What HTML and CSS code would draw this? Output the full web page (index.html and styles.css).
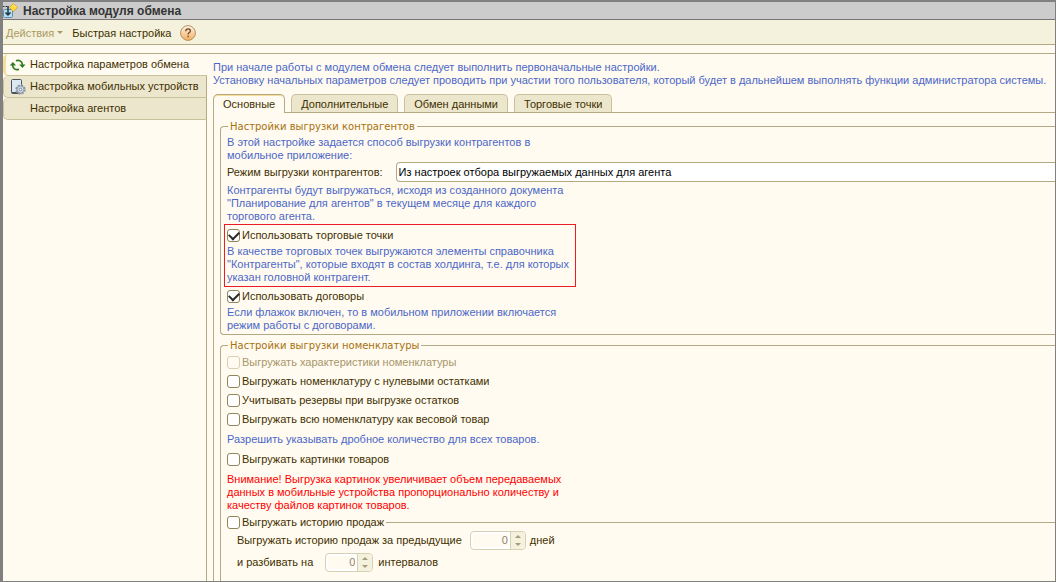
FILE: index.html
```html
<!DOCTYPE html>
<html lang="ru">
<head>
    <meta charset="UTF-8">
    <meta name="viewport" content="width=device-width, initial-scale=1.0">
    <title>Настройка модуля обмена</title>

    <link rel="stylesheet" href="styles.css">
</head>
<body>

    <div class="window">
        <header class="titlebar">
            <svg class="title-icon" width="17" height="16" viewBox="0 0 17 16">
                <rect x=".5" y="6.500" width="9" height="8" rx="1" fill="#b5dcf2" stroke="#5f8fae"/>
                <path d="M5 3v9M2.500 9.500L5 12l2.500-2.500" fill="none" stroke="#1f3442" stroke-width="1.500"/>
                <path d="M0 3.500h1.500M2.500 3.500h1.500" stroke="#1f3442"/>
                <path d="M10.500.5l4 4-4 4-4-4z" fill="#ffd943" stroke="#e0aa28"/>
                <path d="M10.500 2l2 2" stroke="#fff3b0"/>
            </svg>
            <h1>Настройка модуля обмена</h1>
        </header>

        <div class="toolbar">
            <button class="tool actions" type="button" disabled>Действия <span class="arrow"></span></button>
            <button class="tool" type="button">Быстрая настройка</button>
            <button class="tool help" type="button" aria-label="Справка">
                <svg width="16" height="16" viewBox="0 0 16 16">
                    <defs>
                        <linearGradient id="helpFill" x1="0" y1="0" x2="0" y2="1">
                            <stop offset="0" stop-color="#fff3e0"/>
                            <stop offset="1" stop-color="#f3ad60"/>
                        </linearGradient>
                    </defs>
                    <circle cx="8" cy="8" r="7.400" fill="url(#helpFill)" stroke="#b39468"/>
                    <path d="M5.800 6.200c0-3 4.600-3 4.600-.3 0 1.700-2.300 1.600-2.300 3.500M8.100 10.700v1.500" fill="none" stroke="#6b4326" stroke-width="1.300"/>
                </svg>
            </button>
        </div>

        <div class="workspace">
            <nav class="sections">
                <a class="section active" href="#params">
                    <svg width="16" height="16" viewBox="0 0 16 16">
                        <path d="M6 3.800c3-1.300 6 .2 6.500 4M9 12.200c-3 1.300-6-.2-6.500-4" fill="none" stroke="#2c7a1c" stroke-width="1.700"/>
                        <path d="M9.200 7.500h6.300l-3.100 3.500zM-.2 8.500h6.300L2.900 5z" fill="#2c7a1c"/>
                    </svg>
                    Настройка параметров обмена
                </a>
                <a class="section" href="#devices">
                    <svg width="16" height="16" viewBox="0 0 16 16">
                        <rect x="1.500" y=".5" width="10" height="14" rx="1" fill="#dce9f3" stroke="#4a525a"/>
                        <path d="M2 13.500h9" stroke="#4a525a"/>
                        <circle cx="10.500" cy="10.500" r="4.200" fill="#c3ccd6" stroke="#8b99a8" stroke-width="2" stroke-dasharray="2 1.300"/>
                        <circle cx="10.500" cy="10.500" r="3.500" fill="#d5dce3" stroke="#8b99a8"/>
                        <circle cx="10.500" cy="10.500" r="1.300" fill="#fff" stroke="#74869a"/>
                    </svg>
                    Настройка мобильных устройств
                </a>
                <a class="section" href="#agents">Настройка агентов</a>
            </nav>

            <main class="content">
                <p class="hint intro">При начале работы с модулем обмена следует выполнить первоначальные настройки.<br>Установку начальных параметров следует проводить при участии того пользователя, который будет в дальнейшем выполнять функции администратора системы.</p>

                <div class="tabs">
                    <button class="tab active" type="button">Основные</button>
                    <button class="tab" type="button">Дополнительные</button>
                    <button class="tab" type="button">Обмен данными</button>
                    <button class="tab" type="button">Торговые точки</button>
                </div>

                <div class="panel">
                    <fieldset class="group">
                        <legend>Настройки выгрузки контрагентов</legend>
                        <p class="hint">В этой настройке задается способ выгрузки контрагентов в<br>мобильное приложение:</p>
                        <div class="field">
                            <label for="mode">Режим выгрузки контрагентов:</label>
                            <input id="mode" type="text" value="Из настроек отбора выгружаемых данных для агента">
                        </div>
                        <p class="hint">Контрагенты будут выгружаться, исходя из созданного документа<br>"Планирование для агентов" в текущем месяце для каждого<br>торгового агента.</p>
                        <div class="highlight">
                            <label class="check"><input type="checkbox" checked>Использовать торговые точки</label>
                            <p class="hint">В качестве торговых точек выгружаются элементы справочника<br>"Контрагенты", которые входят в состав холдинга, т.е. для которых<br>указан головной контрагент.</p>
                        </div>
                        <label class="check"><input type="checkbox" checked>Использовать договоры</label>
                        <p class="hint">Если флажок включен, то в мобильном приложении включается<br>режим работы с договорами.</p>
                    </fieldset>

                    <fieldset class="group goods">
                        <legend>Настройки выгрузки номенклатуры</legend>
                        <label class="check disabled"><input type="checkbox" disabled>Выгружать характеристики номенклатуры</label>
                        <label class="check"><input type="checkbox">Выгружать номенклатуру с нулевыми остатками</label>
                        <label class="check"><input type="checkbox">Учитывать резервы при выгрузке остатков</label>
                        <label class="check"><input type="checkbox">Выгружать всю номенклатуру как весовой товар</label>
                        <p class="hint">Разрешить указывать дробное количество для всех товаров.</p>
                        <label class="check"><input type="checkbox">Выгружать картинки товаров</label>
                        <p class="hint warning">Внимание! Выгрузка картинок увеличивает объем передаваемых<br>данных в мобильные устройства пропорционально количеству и<br>качеству файлов картинок товаров.</p>
                        <div class="history-head">
                            <label class="check"><input type="checkbox">Выгружать историю продаж</label>
                        </div>
                        <div class="history">
                            <div class="period">
                                <label for="days">Выгружать историю продаж за предыдущие</label>
                                <span class="spin">
                                    <input id="days" type="text" value="0" disabled>
                                    <span class="arrows"></span>
                                </span>
                                <span>дней</span>
                            </div>
                            <div class="period">
                                <label for="intervals">и разбивать на</label>
                                <span class="spin">
                                    <input id="intervals" type="text" value="0" disabled>
                                    <span class="arrows"></span>
                                </span>
                                <span>интервалов</span>
                            </div>
                        </div>
                    </fieldset>
                </div>
            </main>
        </div>
    </div>

</body>
</html>
```
FILE: styles.css
```css
* {
    box-sizing: border-box;
}

body {
    margin: 0;
    font-family: "Liberation Sans", Arial, sans-serif;
    font-size: 11px;
    line-height: 13px;
    color: #3f3000;
    background-color: #fffbf0;
}

p {
    margin: 0;
}

button, input {
    font: inherit;
    color: inherit;
}

.window {
    display: flex;
    flex-direction: column;
    height: 100vh;
    overflow: hidden;
    border: 1px solid #808080;
    border-width: 2px 1px 1px 3px;
}

.titlebar {
    display: flex;
    align-items: center;
    gap: 3px;
    flex: none;
    height: 18px;
    background-color: #cccccc;
    border-bottom: 1px solid #7a7474;
}

h1 {
    margin: 0;
    font-size: 12px;
    line-height: 16px;
    color: #333333;
}

.toolbar {
    display: flex;
    align-items: center;
    gap: 9px;
    flex: none;
    height: 25px;
    padding: 2px 0 0 3px;
    background-color: #f4f2dc;
    border-bottom: 1px solid #b3a982;
}

.tool {
    padding: 0;
    border: none;
    background: none;
}

.tool:disabled {
    color: #ab9962;
}

.help svg {
    display: block;
}

.arrow {
    display: inline-block;
    vertical-align: 3px;
    border: 3px solid transparent;
    border-top-color: #ab9962;
    border-bottom: none;
}

.workspace {
    display: flex;
    flex: 1;
    min-height: 0;
    margin-top: 8px;
    border-top: 1px solid #b3a982;
}

/* left sections */

.sections {
    display: flex;
    flex-direction: column;
    flex: none;
    width: 204px;
}

.sections::after {
    content: "";
    flex: 1;
    border-right: 1px solid #b3a982;
}

.section {
    display: flex;
    align-items: center;
    gap: 4px;
    height: 22px;
    padding-left: 6px;
    color: inherit;
    text-decoration: none;
    background-color: #ece6cd;
    border: 1px solid #c9c09c;
    border-top: none;
    border-right-color: #b3a982;
    border-radius: 5px 0 0 5px;
}

.section:last-child {
    padding-left: 26px;
}

.section.active {
    padding-left: 4px;
    background-color: #fffbf0;
    border-left: 3px solid #f7dc9c;
    border-right: none;
}

/* right part */

.content {
    flex: 1;
    min-width: 0;
    padding: 7px 0 0 6px;
}

.hint {
    color: #4c67c8;
    white-space: nowrap;
}

.tabs {
    display: flex;
    gap: 6px;
    margin-top: 7px;
    border-bottom: 1px solid #b3a982;
}

.tab {
    height: 18px;
    padding: 1px 9px 0;
    background-color: #ece6cd;
    border: 1px solid #c9c09c;
    border-bottom: none;
    border-radius: 5px 5px 0 0;
}

.tab.active {
    height: 19px;
    margin-bottom: -1px;
    background-color: #fffbf0;
    border-color: #b3a982;
    box-shadow: inset 0 1px #f7dc9c;
}

.panel {
    display: flex;
    flex-direction: column;
    gap: 4px;
    height: 100vh;
    padding: 7px 0 0 6px;
    border-left: 1px solid #b3a982;
}

.group {
    min-width: 0;
    margin: 0;
    padding: 3px 0 2px 6px;
    border: 1px solid #b3a982;
    border-right: none;
    border-radius: 4px 0 0 4px;
}

legend {
    margin-left: 1px;
    padding: 0 2px;
    font-family: "DejaVu Sans", Verdana, sans-serif;
    font-size: 10px;
    color: #a8710f;
}

.field {
    display: flex;
    align-items: center;
    gap: 13px;
    margin-bottom: 2px;
}

.field input {
    flex: 1;
    height: 20px;
    padding: 0 2px;
    color: #000;
    background-color: #fff;
    border: 1px solid #b3a982;
    border-right: none;
    border-radius: 4px 0 0 4px;
}

.check {
    display: flex;
    align-items: center;
    gap: 2px;
    height: 13px;
}

.check input {
    appearance: none;
    display: grid;
    place-items: start center;
    width: 13px;
    height: 13px;
    margin: 0;
    background-color: #fff;
    border: 1px solid #8f855c;
    border-radius: 3px;
}

.check input:checked::before {
    content: "";
    width: 8px;
    height: 5px;
    margin-top: 1px;
    border: solid #2b2b2b;
    border-width: 0 0 2px 2px;
    transform: rotate(-45deg);
}

.check.disabled {
    color: #a8966a;
}

.check.disabled input {
    background-color: #fffbf0;
    border-color: #d6d0b4;
}

.highlight {
    width: 352px;
    margin: 1px 0 3px -3px;
    padding: 4px 0 2px 2px;
    border: 1px solid #ed1c24;
}

.check + .hint {
    margin-top: 3px;
}

.goods {
    flex: 1;
    padding-top: 4px;
}

.goods > .check {
    margin-bottom: 6px;
}

.goods > .hint {
    margin: 7px 0;
}

.goods > .warning {
    margin-bottom: 4px;
    color: #ff0000;
}

.history-head {
    display: flex;
    align-items: center;
    gap: 2px;
}

.history-head::after {
    content: "";
    flex: 1;
    height: 1px;
    background-color: #b3a982;
}

.history {
    display: flex;
    flex-direction: column;
    gap: 3px;
    padding: 2px 0 0 10px;
}

.period {
    display: flex;
    align-items: center;
}

.spin {
    display: flex;
    width: 56px;
    height: 19px;
    margin: 0 4px 0 8px;
    overflow: hidden;
    background-color: #fff;
    border: 1px solid #d6d0b4;
    border-radius: 4px;
}

.period + .period .spin {
    width: 48px;
    margin: 0 5px 0 12px;
}

.spin input {
    flex: 1;
    min-width: 0;
    margin: 2px;
    padding: 0;
    color: #8b8570;
    text-align: right;
    background-color: #fffbf0;
    border: none;
}

.arrows {
    display: flex;
    flex-direction: column;
    align-items: center;
    justify-content: center;
    gap: 5px;
    width: 15px;
    background-color: #f4f2dc;
    border-left: 1px solid #d6d0b4;
}

.arrows::before, .arrows::after {
    content: "";
    border: 3px solid transparent;
}

.arrows::before {
    border-top: none;
    border-bottom-color: #a39c80;
}

.arrows::after {
    border-bottom: none;
    border-top-color: #a39c80;
}
```
